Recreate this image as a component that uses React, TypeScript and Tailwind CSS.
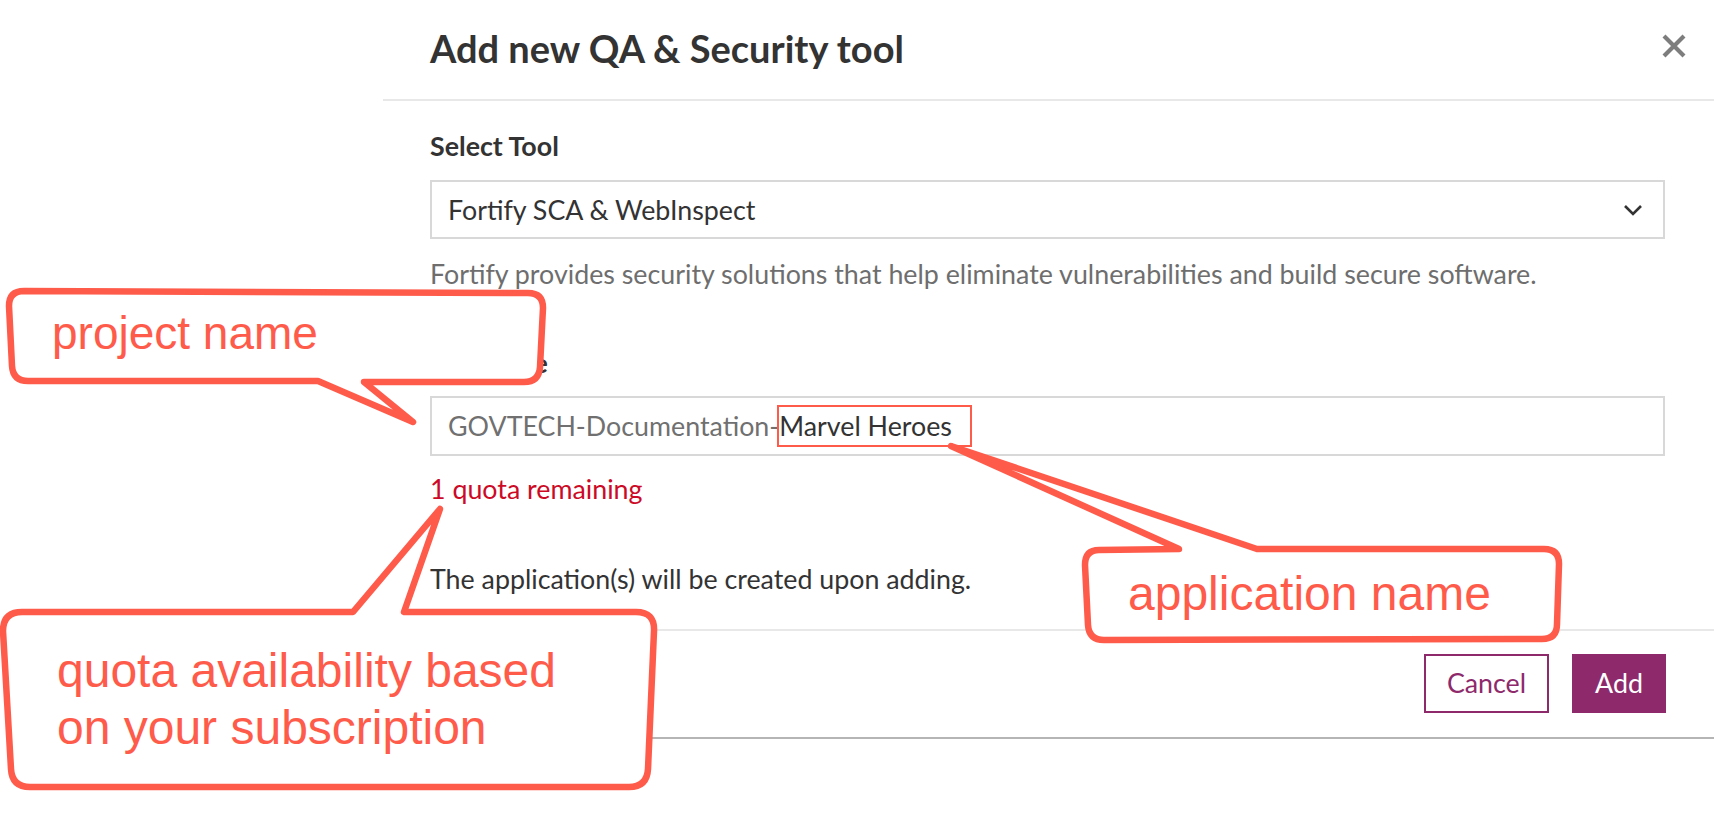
import React from "react";

const CORAL = "#ff5b4b";

function Callouts() {
  return (
    <svg
      className="absolute left-0 top-0 pointer-events-none"
      width={1714}
      height={820}
      viewBox="0 0 1714 820"
    >
      <g fill="#ffffff" stroke={CORAL} strokeWidth={6.5} strokeLinejoin="round" strokeLinecap="round">
        <path d="M 24 291 L 528 293 Q 543 293 543 308 L 540 367 Q 539 382 524 382 L 364 382 L 413 422 L 318 381 L 28 381 Q 13 381 12 366 L 9 306 Q 9 291 24 291 Z" />
        <path d="M 1099 550 L 1179 549 L 951 446 L 1257 549 L 1544 549 Q 1559 549 1559 564 L 1557 624 Q 1557 639 1542 639 L 1104 640 Q 1089 640 1088 625 L 1085 565 Q 1085 550 1099 550 Z" />
        <path d="M 22 612 L 353 612 L 440 509 L 404 612 L 636 612 Q 655 612 654 631 L 648 769 Q 647 787 629 787 L 30 787 Q 12 787 11 769 L 3 631 Q 3 612 22 612 Z" />
      </g>
    </svg>
  );
}

export default function App() {
  return (
    <div className="relative w-[1714px] h-[820px] overflow-hidden bg-white font-['Lato',sans-serif]">
      <div className="ml-[383px] flex flex-col">
        <header className="h-[101px] flex items-center justify-between pl-[47px] pr-[27px] border-b-2 border-[#e8e8e8]">
          <h1 className="text-[38px] leading-none font-bold text-[#333333] pb-[4px]">
            Add new QA &amp; Security tool
          </h1>
          <svg width="26" height="26" viewBox="0 0 26 26" className="mb-[8px]">
            <path d="M3 3 L23 23 M23 3 L3 23" stroke="#7d7d7d" strokeWidth="4.2" strokeLinecap="butt" />
          </svg>
        </header>

        <div className="flex flex-col pl-[47px] pr-[49px] pt-[30px] text-[26.8px] leading-[30px]">
          <label className="font-bold text-[#333333]">Select Tool</label>
          <div className="mt-[19px] h-[59px] border-2 border-[#d8d8d8] flex items-center justify-between pl-[16px] pr-[20px] text-[#333333]">
            <span>Fortify SCA &amp; WebInspect</span>
            <svg width="20" height="12" viewBox="0 0 20 12">
              <path d="M2 2 L10 10 L18 2" fill="none" stroke="#333333" strokeWidth="2.6" />
            </svg>
          </div>
          <p className="mt-[20px] text-[#6e6e6e]">
            Fortify provides security solutions that help eliminate vulnerabilities and build secure software.
          </p>

          <label className="mt-[59px] font-bold text-[#333333] tracking-[-1.2px] whitespace-nowrap">App Name</label>
          <div className="mt-[18px] h-[60px] border-2 border-[#d8d8d8] flex items-center pl-[16px] pr-[20px]">
            <span className="text-[#707070]">GOVTECH-Documentation-</span>
            <span className="relative text-[#333333]">
              Marvel Heroes
              <span className="absolute left-[-2px] right-[-20px] top-[-6px] bottom-[-6px] border-2 border-[#ff5b4b]" />
            </span>
          </div>
          <p className="mt-[18px] text-[#cc0a26]">1 quota remaining</p>
          <p className="mt-[60px] text-[#333333]">The application(s) will be created upon adding.</p>
        </div>

        <footer className="mt-[35px] border-t-2 border-[#e8e8e8] border-b-2 border-b-[#b5b5b5] flex justify-end items-center gap-[23px] pr-[48px] pt-[23px] pb-[24px]">
          <button className="w-[125px] h-[59px] border-2 border-[#8e2a6c] text-[#8e2a6c] text-[26.8px] bg-white">
            Cancel
          </button>
          <button className="w-[94px] h-[59px] bg-[#8e2a6c] text-white text-[26.8px]">Add</button>
        </footer>
      </div>

      <Callouts />

      <div className="absolute left-[52px] top-[305px] text-[46px] leading-[56px] text-[#ff5b4b] font-['Liberation_Sans',Arial,sans-serif] whitespace-nowrap">
        project name
      </div>
      <div className="absolute left-[1128px] top-[566px] text-[48px] leading-[56px] text-[#ff5b4b] font-['Liberation_Sans',Arial,sans-serif] whitespace-nowrap">
        application name
      </div>
      <div className="absolute left-[57px] top-[642px] text-[48px] leading-[57px] text-[#ff5b4b] font-['Liberation_Sans',Arial,sans-serif] whitespace-nowrap">
        quota availability based
        <br />
        on your subscription
      </div>
    </div>
  );
}
